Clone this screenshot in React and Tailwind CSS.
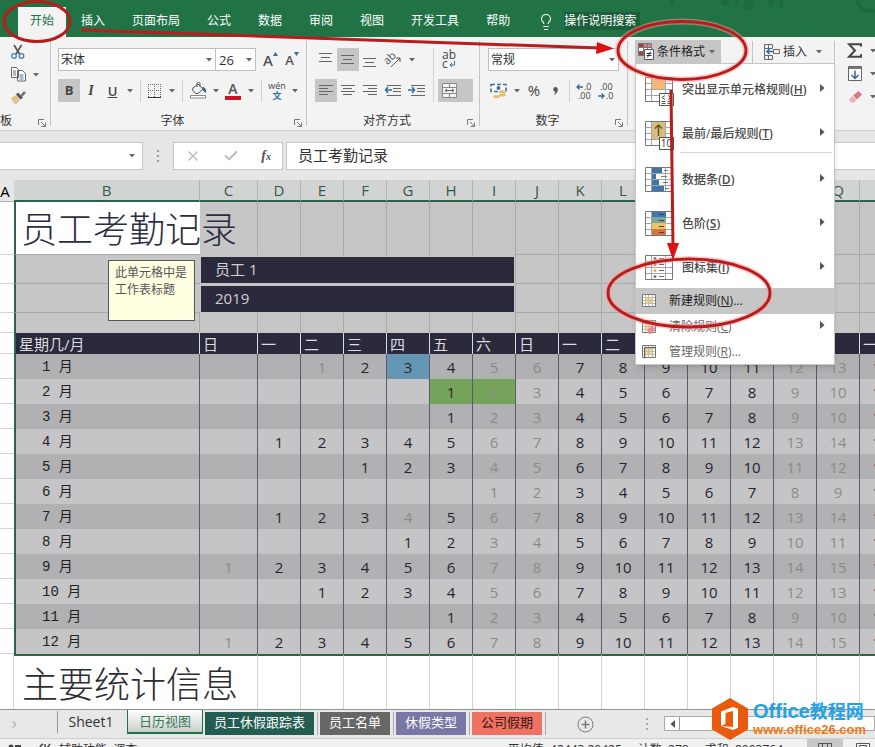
import { ChevronRight, Lightbulb, Check, X } from 'lucide-react';

const WEEK = ['日', '一', '二', '三', '四', '五', '六'];
const COLS = 'CDEFGHIJKLMNOPQR'.split('');
// index of the column that holds day 1 of each month
const STARTS = [2, 5, 5, 1, 3, 6, 1, 4, 0, 2, 5, 0];
const HOLIDAYS = ['0-2', '6-4'];
const MARKS = { '0-4': 'bg-[#6496b4]', '1-5': 'bg-[#76a35b]', '1-6': 'bg-[#76a35b]' };

const TABS = ['开始', '插入', '页面布局', '公式', '数据', '审阅', '视图', '开发工具', '帮助'];

const SHEETS = [
  ['员工休假跟踪表', 'bg-[#245c52] text-white'],
  ['员工名单', 'bg-[#676767] text-white'],
  ['休假类型', 'bg-[#7877a5] text-white'],
  ['公司假期', 'bg-[#ee7263] text-[#3c1512]'],
];

function Caret() {
  return (
    <span className="w-[13px] shrink-0 flex justify-center">
      <svg width="6" height="4" viewBox="0 0 6 4"><path d="M0 0h6L3 3.6z" fill="#666" /></svg>
    </span>
  );
}

function Tool({ label, className = 'w-[22px]', children }) {
  return (
    <button aria-label={label} className={`h-[23px] shrink-0 flex items-center justify-center ${className}`}>
      {children}
    </button>
  );
}

const Sep = () => <span className="w-px h-[22px] mx-1 shrink-0 bg-[#d0d0d0]" />;

function GroupFooter({ children }) {
  return (
    <>
      <footer className="flex items-center text-xs leading-[18px] text-[#333]">
        {children}
        <svg width="8" height="8" viewBox="0 0 8 8" className="mr-[5px] mt-1 shrink-0" fill="none" stroke="#777">
          <path d="M.5 6V.5H6M3 3l4 4M7.5 3.5v4h-4" />
        </svg>
      </footer>
      <span className="absolute right-0 top-[4px] bottom-[4px] w-px bg-[#c4c4c4]" />
    </>
  );
}

function Group({ title, className, children }) {
  return (
    <section className={`relative shrink-0 flex flex-col justify-between ${className}`}>
      {children}
      <GroupFooter><span className="flex-1 text-center whitespace-nowrap">{title}</span></GroupFooter>
    </section>
  );
}

function Lines({ d, blue }) {
  return (
    <svg width="18" height="14" viewBox="0 0 18 14" fill="none">
      <path d={d} stroke="#666" />
      {blue && <path d={blue} stroke="#2f6c96" strokeWidth="1.5" />}
    </svg>
  );
}

function Clipboard() {
  return (
    <section className="relative w-[51px] shrink-0 flex flex-col justify-between pt-[3px]">
      <div className="flex flex-col pl-[7px]">
        <Tool label="剪切">
          <svg width="16" height="16" viewBox="0 0 16 16" fill="none">
            <path d="M4 1l5.5 9M11.500 1L6 10" stroke="#555" strokeWidth="1.7" />
            <circle cx="4" cy="12" r="2.3" stroke="#4d7ca3" strokeWidth="1.3" />
            <circle cx="11.5" cy="12" r="2.3" stroke="#4d7ca3" strokeWidth="1.3" />
          </svg>
        </Tool>
        <div className="flex items-center">
          <Tool label="复制">
            <svg width="17" height="15" viewBox="0 0 17 15" fill="#fff" stroke="#666">
              <path d="M1.5.5h5l2 2v8h-7zM7.5 3.5h5l3 3v7.500h-8z" />
              <path d="M3 4h3M3 6h3M3 8h3M9.500 8h4M9.500 10h4M9.500 12h4" stroke="#4d7ca3" />
            </svg>
          </Tool>
          <Caret />
        </div>
        <Tool label="格式刷">
          <svg width="17" height="15" viewBox="0 0 17 15">
            <path d="M1 8l5-3 4 5-4 4.5c-2-1-4-3.5-5-6.5z" fill="#e0c48b" />
            <path d="M6 4.5l2-2 5 5-2.5 2z" fill="#555" />
            <path d="M10 5.5l4-4.5 2 2-4 4z" fill="#777" />
          </svg>
        </Tool>
      </div>
      <GroupFooter><span className="flex-1">板</span></GroupFooter>
    </section>
  );
}

function FontGroup() {
  return (
    <Group title="字体" className="w-[256px] pt-[11px]">
      <div className="flex flex-col gap-2 pl-[7px]">
        <div className="flex items-center h-[23px]">
          <div className="flex items-center w-[158px] h-[23px] bg-white border border-[#c0c0c0]">
            <select aria-label="字体" className="appearance-none flex-1 pl-[2px] text-xs leading-5 text-[#333] outline-none">
              <option>宋体</option>
            </select>
            <Caret />
          </div>
          <div className="flex items-center w-10 h-[23px] bg-white border border-l-0 border-[#c0c0c0]">
            <select aria-label="字号" className="appearance-none w-[26px] pl-[3px] text-[13px] leading-5 text-[#333] outline-none">
              <option>26</option>
            </select>
            <Caret />
          </div>
          <Tool label="增大字号" className="w-[25px] pl-1">
            <span className="text-[15px] leading-5 font-semibold text-[#555]">A</span>
            <svg width="5" height="4" viewBox="0 0 5 4" className="mb-3"><path d="M0 4l2.5-4L5 4z" fill="#346c96" /></svg>
          </Tool>
          <Tool label="减小字号">
            <span className="text-[13px] leading-5 font-semibold text-[#555]">A</span>
            <svg width="5" height="4" viewBox="0 0 5 4" className="mb-3"><path d="M0 0h5L2.5 4z" fill="#346c96" /></svg>
          </Tool>
        </div>
        <div className="flex items-center h-[23px] text-[#444]">
          <Tool label="加粗" className="w-[22px] bg-[#c6c6c6]"><b className="text-[13px]">B</b></Tool>
          <Tool label="倾斜"><i className="text-sm font-bold font-['Liberation_Serif',serif]">I</i></Tool>
          <Tool label="下划线" className="w-[21px]"><span className="text-[13px] leading-[14px] font-semibold underline">U</span></Tool>
          <Caret />
          <Sep />
          <Tool label="边框" className="w-5">
            <svg width="14" height="14" viewBox="0 0 14 14" fill="none" stroke="#666">
              <path d="M.5 0v13M6.5 0v13M12.5 0v13M0 .5h13M0 6.5h13" strokeDasharray="1 1" />
              <path d="M0 13.500h13" stroke="#333" />
            </svg>
          </Tool>
          <Caret />
          <Sep />
          <Tool label="填充颜色">
            <svg width="17" height="17" viewBox="0 0 17 17" fill="none" stroke="#555">
              <path d="M3 6l5-4 5 5-5 4.500H5.500L2.500 8zM7 5V1.500c0-1.500 3-1.500 3 0V5" />
              <path d="M13 5c2 1 3 3 2.500 5.500L13 8z" fill="#346c96" stroke="#346c96" />
              <path d="M.5 13.500h15v2.500H.5z" fill="#fff" stroke="#888" />
            </svg>
          </Tool>
          <Caret />
          <Tool label="字体颜色" className="w-[22px] flex-col">
            <span className="text-sm leading-[14px] font-semibold text-[#555]">A</span>
            <span className="w-4 h-1 bg-[#cf1020]" />
          </Tool>
          <Caret />
          <Sep />
          <Tool label="拼音" className="w-[22px] flex-col">
            <span className="text-[9px] leading-[10px]">wén</span>
            <span className="text-[9px] leading-[10px] font-bold text-[#2f6c96]">文</span>
          </Tool>
          <Caret />
        </div>
      </div>
    </Group>
  );
}

function AlignGroup() {
  return (
    <Group title="对齐方式" className="w-[173px] pt-[11px]">
      <div className="flex pl-2">
        <div className="flex flex-col gap-2">
          <div className="flex items-center h-[23px]">
            <Tool label="顶端对齐"><Lines d="M2 .5h13M4 4.500h9M2 8.500h13" /></Tool>
            <Tool label="垂直居中" className="w-[22px] bg-[#c6c6c6]"><Lines d="M2 2.500h13M4 6.500h9M2 10.500h13" /></Tool>
            <Tool label="底端对齐"><Lines d="M2 5.500h13M4 9.500h9M2 13.500h13" /></Tool>
            <Tool label="方向" className="w-6">
              <svg width="20" height="20" viewBox="0 0 20 20" fill="none" stroke="#555" className="overflow-visible">
                <text x="2" y="13" fontSize="11" fill="#555" stroke="none" transform="rotate(-45 6 11)">ab</text>
                <path d="M8 17l9-9M13 8h4v4" />
              </svg>
            </Tool>
            <Caret />
          </div>
          <div className="flex items-center h-[23px]">
            <Tool label="左对齐" className="w-[22px] bg-[#c6c6c6]"><Lines d="M2 1.500h14M2 4.500h9M2 7.500h14M2 10.500h9" /></Tool>
            <Tool label="居中"><Lines d="M2 1.500h14M4 4.500h9M2 7.500h14M4 10.500h9" /></Tool>
            <Tool label="右对齐"><Lines d="M2 1.500h14M7 4.500h9M2 7.500h14M7 10.500h9" /></Tool>
            <Tool label="减少缩进量" className="w-6"><Lines d="M3 1.500h14M9 4.500h8M9 7.500h8M3 11.500h14" blue="M8 6H1.500M4 3L1.500 6 4 9" /></Tool>
            <Tool label="增加缩进量" className="w-6"><Lines d="M3 1.500h14M9 4.500h8M9 7.500h8M3 11.500h14" blue="M0 6h6.500M4 3l2.500 3L4 9" /></Tool>
          </div>
        </div>
        <span className="w-px mx-1 bg-[#d0d0d0]" />
        <div className="flex flex-col gap-2">
          <Tool label="自动换行" className="w-[22px]">
            <svg width="16" height="20" viewBox="0 0 16 20" className="overflow-visible">
              <text x="1" y="9" fontSize="12" fill="#444">ab</text>
              <text x="1" y="18" fontSize="12" fill="#444">c</text>
              <path d="M13.500 11v4H9M11 13l-2 2 2 2" fill="none" stroke="#346c96" />
            </svg>
          </Tool>
          <button aria-label="合并后居中" className="w-[35px] h-[23px] flex items-center pl-1 bg-[#c6c6c6]">
            <svg width="15" height="15" viewBox="0 0 15 15" fill="#f4f4f4" stroke="#888">
              <path d="M.5.5h14v14H.5zM.5 4.500h14M.5 10.500h14M7.500.5v4M7.500 10.500v4" />
              <path d="M3 7.500h9M5 6L3 7.500 5 9M10 6l2 1.500L10 9" fill="none" stroke="#666" />
            </svg>
          </button>
        </div>
      </div>
    </Group>
  );
}

function Decimal({ top, bottom, arrow, low }) {
  return (
    <svg width="18" height="18" viewBox="0 0 18 18" fill="#444" className="overflow-visible">
      <text x={low ? 2 : 8} y="8" fontSize="9">{top}</text>
      <text x={low ? 8 : 2} y="17" fontSize="9">{bottom}</text>
      <path d={arrow} stroke="#346c96" strokeWidth="1.3" fill="none" />
    </svg>
  );
}

function NumberGroup() {
  return (
    <Group title="数字" className="w-[148px] pt-[11px]">
      <div className="flex flex-col gap-2 pl-2">
        <div className="flex items-center w-[131px] h-[23px] bg-white border border-[#c0c0c0]">
          <select aria-label="数字格式" className="appearance-none flex-1 pl-[2px] text-xs leading-5 text-[#333] outline-none">
            <option>常规</option>
          </select>
          <Caret />
        </div>
        <div className="flex items-center h-[23px] text-[#444]">
          <Tool label="会计数字格式">
            <svg width="18" height="16" viewBox="0 0 18 16" fill="none">
              <path d="M1 1.500h15v7H1z" fill="#fff" stroke="#456f92" strokeWidth="1.6" strokeDasharray="4 2" />
              <circle cx="8.5" cy="5" r="2" fill="#456f92" />
              <ellipse cx="12.5" cy="9" rx="3.5" ry="1.5" fill="#e5bf6a" />
              <ellipse cx="12.5" cy="12" rx="3.5" ry="1.5" fill="#e5bf6a" />
              <ellipse cx="6.5" cy="13.5" rx="3.5" ry="1.5" fill="#e5bf6a" />
            </svg>
          </Tool>
          <Caret />
          <Tool label="百分比样式"><span className="text-[15px]">%</span></Tool>
          <Tool label="千位分隔样式" className="w-5">
            <svg width="5" height="8" viewBox="0 0 5 8"><path d="M2.500 0C4 0 5 1 4.800 3 4.600 5.500 3 7 1 8c1-1.500 1.400-2.500 1.200-3.500C-.5 4.500-.3 0 2.500 0z" fill="#555" /></svg>
          </Tool>
          <Sep />
          <Tool label="增加小数位数"><Decimal top=".0" bottom=".00" arrow="M7 5H1M3.500 2.500L1 5l2.500 2.500" /></Tool>
          <Tool label="减少小数位数"><Decimal low top=".00" bottom=".0" arrow="M0 14h6M3.500 11.500L6 14l-2.500 2.500" /></Tool>
        </div>
      </div>
    </Group>
  );
}

// 28px grid that the large menu icons are drawn on
function GridIcon({ children }) {
  return (
    <svg width="28" height="28" viewBox="0 0 28 28" fill="none" className="shrink-0">
      <path d="M.5 1.500h27v24H.5z" fill="#fff" />
      <path d="M.5 7.500h27M.5 13.500h27M.5 19.500h27M6.500 1.500v24M20.500 1.500v24" stroke="#a5a5a5" />
      {children}
      <path d="M.5 1.500h27v24H.5z" stroke="#777" />
    </svg>
  );
}

const BIG_ITEMS = [
  ['突出显示单元格规则', 'H', (
    <div className="relative shrink-0" key="h">
      <GridIcon><path d="M7 2h13v11H7z" fill="#f4b978" /></GridIcon>
      <svg width="15" height="13" viewBox="0 0 15 13" className="absolute left-[14px] top-[17px]" fill="none" stroke="#555">
        <path d="M.5.5h14v12H.5z" fill="#fff" />
        <path d="M6 2.500L3 4.500l3 2M2.500 8.500h4M2.500 10.500h4M9 2.500l3 2-3 2M8.500 8.500h4M8.500 10.500h4" />
      </svg>
    </div>
  )],
  ['最前/最后规则', 'T', (
    <div className="relative shrink-0" key="t">
      <GridIcon>
        <path d="M7 2h13v17H7z" fill="#d9bd7d" />
        <path d="M13.500 16V5M10 8.500L13.500 5 17 8.500" stroke="#6b5325" strokeWidth="1.5" />
      </GridIcon>
      <span className="absolute left-[14px] top-[17px] w-[15px] h-[13px] border border-[#555] bg-white text-[10px] leading-[11px] text-[#333] text-center">10</span>
    </div>
  )],
  ['数据条', 'D', (
    <GridIcon key="d">
      <path d="M7 2h10v5H7zM7 8h4v5H7zM7 14h7v5H7zM7 20h12v5H7z" fill="#3f76ab" />
      <path d="M19 4.500h4M16 10.500h6M18 16.500h5M20 22.500h4" stroke="#777" />
    </GridIcon>
  )],
  ['色阶', 'S', (
    <GridIcon key="s">
      <path d="M7 2h14v5H7z" fill="#3f76ab" />
      <path d="M7 7h14v6H7z" fill="#78a898" />
      <path d="M7 13h14v6H7z" fill="#ecc567" />
      <path d="M7 19h14v6H7z" fill="#d9723d" />
      <path d="M14 4.500h5M14 10.500h5M14 16.500h5M14 22.500h5" stroke="#444" />
    </GridIcon>
  )],
  ['图标集', 'I', (
    <GridIcon key="i">
      <circle cx="10" cy="4.5" r="1.5" fill="#777" />
      <circle cx="10" cy="10.5" r="1.5" fill="#d9723d" />
      <circle cx="10" cy="16.5" r="1.5" fill="#ecb247" />
      <circle cx="10" cy="22.5" r="1.5" fill="#777" />
      <path d="M14 4.500h5M14 10.500h5M14 16.500h5M14 22.500h5" stroke="#666" />
    </GridIcon>
  )],
];

function RuleIcon({ kind }) {
  return (
    <svg width="14" height="14" viewBox="0 0 14 14" fill="none" className="shrink-0">
      <path d="M.5.5h13v12H.5z" fill="#fff" />
      <path d="M4 4h6v5H4z" fill="#f2dc8c" />
      <path d="M.5 3.500h13M.5 6.500h13M.5 9.500h13M3.500.5v12M6.500.5v12M10.500.5v12" stroke="#c4bfa8" />
      <path d="M.5.5h13v12H.5z" stroke="#777" />
      {kind === 'clear' && <path d="M5 10l5-4 4 3-5 5H7z" fill="#e58a98" />}
      {kind === 'manage' && <path d="M2.500 13.500v-11h11" stroke="#666" />}
    </svg>
  );
}

const SubArrow = () => (
  <svg width="5" height="8" viewBox="0 0 5 8" className="ml-auto mr-[9px] mb-1"><path d="M0 0l4.500 4L0 8z" fill="#555" /></svg>
);

function FormatMenu() {
  return (
    <div role="menu" className="absolute z-20 left-0 top-full w-[200px] pt-2 border border-[#c6c6c6] bg-white shadow-md text-xs leading-[18px] text-[#4a4a4a]">
      <div className="flex flex-col gap-2">
        {BIG_ITEMS.map(([name, key, icon]) => (
          <div key={key}>
            <button role="menuitem" className="flex items-center gap-[9px] w-full h-9 pl-[9px] font-medium whitespace-nowrap">
              {icon}
              <span>{name}<span className="font-semibold">(<u>{key}</u>)</span></span>
              <SubArrow />
            </button>
            {key === 'T' && <hr className="ml-11 mr-[2px] mb-[1px] border-[#d4d4d4]" />}
          </div>
        ))}
      </div>
      <button role="menuitem" className="flex items-center gap-[13px] w-full h-[26px] pl-[6px] mt-[2px] bg-[#c6c6c6] text-[#222]">
        <RuleIcon kind="new" /><span>新建规则(<u>N</u>)...</span>
      </button>
      <button role="menuitem" className="flex items-center gap-[13px] w-full h-[25px] pl-[6px] text-[#666]">
        <RuleIcon kind="clear" /><span>清除规则(<u>C</u>)</span><SubArrow />
      </button>
      <button role="menuitem" className="flex items-center gap-[13px] w-full h-[25px] pl-[6px] text-[#666]">
        <RuleIcon kind="manage" /><span>管理规则(<u>R</u>)...</span>
      </button>
    </div>
  );
}

function Ribbon() {
  return (
    <div className="flex h-[94px] shrink-0 bg-[#f3f3f3] border-b border-[#cfcfcf]">
      <Clipboard />
      <FontGroup />
      <AlignGroup />
      <NumberGroup />
      <section className="relative w-[125px] shrink-0 pl-[7px] pt-[3px]">
        <div className="relative w-[86px]">
          <button aria-haspopup="menu" aria-expanded="true" className="flex items-center w-full h-[23px] pl-[3px] bg-[#c6c6c6] text-xs text-[#222] whitespace-nowrap">
            <svg width="17" height="17" viewBox="0 0 17 17" fill="none" className="mr-[2px] shrink-0">
              <path d="M.5.5h13v12H.5z" fill="#fff" />
              <path d="M1 1h4v3H1zM1 8h4v4H1z" fill="#a83b3b" />
              <path d="M6 1h7v3H6z" fill="#c98383" />
              <path d="M.5.5h13v12H.5zM.5 4.500h13M.5 8.500h13M5.500.5v12M9.500.5v12" stroke="#777" />
              <path d="M6.500 6.500h9v10h-9z" fill="#fff" stroke="#555" />
              <path d="M8.500 10.500h5M8.500 12.500h5M12.500 8.500l-3 6" stroke="#333" />
            </svg>
            条件格式
            <Caret />
          </button>
          <FormatMenu />
        </div>
        <span className="absolute right-0 top-[4px] bottom-[4px] w-px bg-[#c4c4c4]" />
      </section>
      <section className="relative w-[82px] shrink-0 pl-[10px] pt-[3px]">
        <button className="flex items-center h-[23px] text-xs text-[#333] whitespace-nowrap">
          <svg width="17" height="16" viewBox="0 0 17 16" fill="none" stroke="#666" className="mr-[3px]">
            <path d="M1.500.5h4v4h-4zM5.500.5h4v4h-4zM1.500 11.500h4v4h-4zM5.500 11.500h4v4h-4zM1.500 4.500v7M10.500 5.500h6v4h-6z" />
            <path d="M10 7.500H4M6.500 5L4 7.500 6.500 10" stroke="#2f6c96" strokeWidth="1.5" />
          </svg>
          插入
          <span className="ml-[5px]"><Caret /></span>
        </button>
        <span className="absolute right-0 top-[4px] bottom-[4px] w-px bg-[#c4c4c4]" />
      </section>
      <section className="shrink-0 pl-[9px] pt-[2px] flex flex-col">
        <div className="flex items-center">
          <Tool label="自动求和">
            <svg width="16" height="15" viewBox="0 0 16 15" fill="none" stroke="#444" strokeWidth="2">
              <path d="M14 3.500V1.200H2L8 7.500 2 13.800h12v-2.500" />
            </svg>
          </Tool>
          <Caret />
        </div>
        <div className="flex items-center">
          <Tool label="填充">
            <svg width="14" height="15" viewBox="0 0 14 15" fill="none">
              <path d="M.5.5h13v14H.5z" fill="#fff" stroke="#666" />
              <path d="M1 1h12v2H1z" fill="#777" />
              <path d="M7 4.500v8M3.500 9L7 12.500 10.500 9" stroke="#2f6c96" strokeWidth="1.5" />
            </svg>
          </Tool>
          <Caret />
        </div>
        <div className="flex items-center">
          <Tool label="清除">
            <svg width="13" height="12" viewBox="0 0 13 12">
              <path d="M4 4.500L9.500 0 13 3.500 8 8.500z" fill="#d97787" />
              <path d="M3.500 5l4 4L5 11.500H2.500L0 8.500z" fill="#edb0b8" />
            </svg>
          </Tool>
          <Caret />
        </div>
      </section>
    </div>
  );
}

function TitleTabs() {
  return (
    <nav className="relative flex items-end h-[37px] shrink-0 pl-[18px] bg-[#217346] overflow-hidden">
      <svg width="240" height="37" viewBox="0 0 240 37" className="absolute right-0 top-0" fill="none" stroke="#1e6a40" strokeWidth="4">
        <path d="M37 0v5M102 0v6M136 0v6M146 0v7" />
        <circle cx="90" cy="2" r="2" />
        <circle cx="114" cy="5" r="3" />
        <circle cx="236" cy="-4" r="15" />
      </svg>
      <div className="flex gap-[3px] text-xs text-white">
        {TABS.map((tab, i) => (
          <button key={tab} className={`h-[30px] px-3 pb-[2px] whitespace-nowrap ${i === 0 ? 'bg-[#f3f3f3] text-[#217346]' : ''}`}>
            {tab}
          </button>
        ))}
      </div>
      <label htmlFor="tell-me" className="h-[30px] flex items-center pl-[15px] text-white">
        <Lightbulb size={18} strokeWidth={1.5} />
      </label>
      <input id="tell-me" aria-label="操作说明搜索" placeholder="操作说明搜索" className="relative w-[76px] h-[18px] mb-[7px] ml-[9px] text-xs leading-[18px] bg-[#1d5f3b] placeholder-white outline-none" />
    </nav>
  );
}

function FormulaBar() {
  return (
    <div className="flex items-center h-[49px] shrink-0 bg-[#e6e6e6]">
      <div className="flex items-center w-[143px] h-[28px] pr-[4px] shrink-0 bg-white border border-l-0 border-[#c6c6c6]">
        <input aria-label="名称框" className="flex-1 min-w-0 outline-none" />
        <Caret />
      </div>
      <span className="w-[30px] flex justify-center shrink-0">
        <svg width="2" height="12" viewBox="0 0 2 12" fill="#999"><path d="M0 0h2v2H0zM0 5h2v2H0zM0 10h2v2H0z" /></svg>
      </span>
      <div className="flex items-center justify-around w-[110px] h-[28px] shrink-0 bg-white border border-[#c6c6c6]">
        <button aria-label="取消" className="text-[#bbb]"><X size={16} strokeWidth={2} /></button>
        <button aria-label="输入" className="text-[#bbb]"><Check size={16} strokeWidth={3} /></button>
        <button aria-label="插入函数" className="text-sm italic font-bold text-[#555] font-['Liberation_Serif',serif]">f<span className="text-[10px]">x</span></button>
      </div>
      <input aria-label="编辑栏" defaultValue="员工考勤记录" className="flex-1 min-w-0 h-[28px] ml-[3px] pl-[11px] pb-[2px] bg-white border border-r-0 border-[#c6c6c6] text-[15px] text-[#333] outline-none" />
    </div>
  );
}

const LINE = 'border-r border-[#a9a9a9]';
const SERIF = "font-['Liberation_Serif','Noto_Sans_CJK_SC',serif] font-light";

function TitleBlock() {
  const rest = COLS.slice(7);
  return (
    <>
      <tr className="h-[53px]">
        <td className="bg-white border-b border-[#d4d4d4]" />
        <th scope="row" className={`relative bg-white border-l-2 border-l-[#2f6347] border-b border-b-[#a9a9a9] text-left align-bottom ${SERIF}`}>
          <span className="relative z-10 block pl-[5px] text-4xl leading-[46px] text-[#2d2d42] whitespace-nowrap">员工考勤记录</span>
        </th>
        {COLS.map((c, i) => <td key={c} className={`${LINE} ${i > 6 ? 'border-b' : ''}`} />)}
      </tr>
      {['员工 1', '2019'].map((text, i) => (
        <tr key={text} className="h-[29px]">
          <td className="bg-white border-b border-[#d4d4d4]" />
          <td className="relative border-l-2 border-l-[#2f6347] border-b border-b-[#a9a9a9]">
            {i === 0 && (
              <div className="absolute z-10 left-[92px] top-[5px] w-[87px] h-[61px] pl-[6px] pt-[3px] bg-[#fffee1] border border-[#555] text-xs leading-[17px] text-[#555]">
                此单元格中是<br />工作表标题
              </div>
            )}
          </td>
          <td colSpan={7} className="border-r border-[#a9a9a9] p-px">
            <div className="h-[26px] pl-[14px] bg-[#2b2a3d] text-[15px] leading-6 text-[#d0d0d6]">{text}</div>
          </td>
          {rest.map((c) => <td key={c} className={`${LINE} border-b`} />)}
        </tr>
      ))}
      <tr className="h-5">
        <td className="bg-white border-b border-[#d4d4d4]" />
        <td className="border-l-2 border-l-[#2f6347] border-r border-r-[#a9a9a9]" />
        {COLS.map((c) => <td key={c} className={LINE} />)}
      </tr>
    </>
  );
}

function MonthRow({ month }) {
  return (
    <tr className={`h-[25px] ${month % 2 ? 'bg-[#c5c4c6]' : 'bg-[#b1b0b2]'}`}>
      <td className="bg-white border-b border-[#d4d4d4]" />
      <th scope="row" className="border-l-2 border-l-[#2f6347] border-r border-r-[#5c5b69] pl-[26px] text-left text-sm leading-5 font-normal text-[#222] whitespace-pre font-['Liberation_Mono','Noto_Sans_CJK_SC',monospace]">
        {month + 1} 月
      </th>
      {COLS.map((c, i) => {
        const day = i - STARTS[month] + 1;
        const id = `${month}-${i}`;
        const off = i % 7 === 0 || i % 7 === 6 || HOLIDAYS.includes(id);
        return (
          <td key={c} className={`border-r border-[#5c5b69] text-center text-[15px] leading-5 ${MARKS[id] || ''} ${off ? 'text-[#8b8b8d]' : 'text-[#26262e]'}`}>
            {day > 0 ? day : ''}
          </td>
        );
      })}
    </tr>
  );
}

function Sheet() {
  return (
    <div className="shrink-0 overflow-hidden bg-white">
      <table className="table-fixed w-[903px] border-separate border-spacing-0 bg-[#c6c6c6] [&_td]:py-0 [&_th]:py-0">
        <colgroup>
          <col className="w-[14px]" />
          <col className="w-[186px]" />
          <col className="w-[58px]" />
          {COLS.slice(1).map((c) => <col key={c} className="w-[43px]" />)}
        </colgroup>
        <thead>
          <tr className="h-[22px] text-[15px] leading-5 text-[#38574a]">
            <th className="bg-[#e6e6e6] border-b border-[#b0b0b0] p-0 font-normal text-black">
              <span className="flex justify-center w-[10px]">A</span>
            </th>
            {['B', ...COLS].map((c) => (
              <th key={c} className="p-0 font-normal bg-[#d2d4d3] border-r border-r-[#b2b5b3] border-b-2 border-b-[#2f6347]">{c}</th>
            ))}
          </tr>
        </thead>
        <tbody>
          <TitleBlock />
          <tr className="h-[21px] bg-[#2b2a3d] text-[15px] leading-5 text-[#dcdce0]">
            <td className="bg-white border-b border-[#d4d4d4]" />
            <th className="border-l-2 border-l-[#2f6347] border-r border-r-[#dcdce0] pl-[3px] pb-px text-left font-normal">星期几/月</th>
            {COLS.map((c, i) => (
              <th key={c} className="border-r border-[#dcdce0] pl-[3px] text-left font-normal">{WEEK[i % 7]}</th>
            ))}
          </tr>
          {STARTS.map((_, m) => <MonthRow key={m} month={m} />)}
          <tr className="h-[55px] bg-white">
            <td className="border-r border-[#d4d4d4]" />
            <th colSpan={2} scope="row" className={`border-t-2 border-t-[#2f6347] border-r border-r-[#d4d4d4] pl-[8px] text-left align-bottom ${SERIF}`}>
              <span className="block text-4xl leading-[46px] text-[#2d2d32] whitespace-nowrap">主要统计信息</span>
            </th>
            {COLS.slice(1).map((c) => <td key={c} className="border-t-2 border-t-[#2f6347] border-r border-r-[#d4d4d4]" />)}
          </tr>
        </tbody>
      </table>
    </div>
  );
}

function SheetTabs() {
  return (
    <div className="flex h-[29px] shrink-0 bg-[#e9e8e8] border-t border-[#8a968f] text-[13px] leading-5">
      <button aria-label="下一张" className="w-[57px] pl-[9px] shrink-0 text-[#b5b5b5]"><ChevronRight size={11} strokeWidth={3} /></button>
      <button className="w-[70px] h-[22px] mt-px pr-[3px] shrink-0 border-l border-[#999] text-sm text-[#333]">Sheet1</button>
      <button className="w-[76px] h-[24px] shrink-0 bg-linear-to-b from-white to-[#c9d0cc] border-x border-b-2 border-[#217346] text-[#38785a]">日历视图</button>
      {SHEETS.map(([name, tone]) => (
        <div key={name} className="flex h-[23px] mt-[2px] shrink-0">
          <button className={`ml-[2px] mr-[3px] px-[9px] pb-[4px] whitespace-nowrap ${tone}`}>{name}</button>
          <span className="w-px bg-[#aaa]" />
        </div>
      ))}
      <button aria-label="新工作表" className="ml-[31px] shrink-0">
        <svg width="17" height="17" viewBox="0 0 17 17" fill="none" stroke="#777">
          <circle cx="8.5" cy="8.5" r="7.5" /><path d="M8.500 4.500v8M4.500 8.500h8" strokeWidth="1.5" />
        </svg>
      </button>
      <span className="flex items-center ml-auto mr-4">
        <svg width="2" height="12" viewBox="0 0 2 12" fill="#aaa"><path d="M0 0h2v2H0zM0 5h2v2H0zM0 10h2v2H0z" /></svg>
      </span>
      <div className="flex w-[211px] h-[15px] mt-[6px] shrink-0 bg-white border border-[#aaa]">
        <button aria-label="向左滚动" className="w-[15px] flex items-center justify-center border-r border-[#999]">
          <svg width="5" height="8" viewBox="0 0 5 8"><path d="M5 0v8L.5 4z" fill="#555" /></svg>
        </button>
      </div>
    </div>
  );
}

function StatusBar() {
  return (
    <div className="flex items-center h-[22px] shrink-0 bg-[#f1f1f1] border-t border-[#d0d0d0] text-xs leading-[18px] text-[#333] whitespace-nowrap">
      <svg width="14" height="14" viewBox="0 0 14 14" className="ml-2" fill="#444">
        <circle cx="3" cy="4" r="2.5" /><path d="M7 2h6v10H1V8h10V4H7z" />
      </svg>
      <svg width="14" height="14" viewBox="0 0 14 14" className="ml-4 mr-[7px]" fill="none" stroke="#444" strokeWidth="1.5">
        <path d="M5 1C1 3 0 9 5 12M7 1v9M12 1l-3 4 4 2" />
      </svg>
      <span>辅助功能: 调查</span>
      <div className="flex gap-4 ml-auto mr-6">
        <span>平均值: 42443.20425</span>
        <span>计数: 278</span>
        <span>求和: 8093764</span>
      </div>
      <button aria-label="普通" className="flex items-center justify-center w-9 h-[21px] bg-[#c8c8c8]">
        <svg width="14" height="13" viewBox="0 0 14 13" fill="none" stroke="#555"><path d="M.5.5h13v12H.5zM.5 4.500h13M.5 8.500h13M4.500.5v12M9.500.5v12" /></svg>
      </button>
      <button aria-label="页面布局视图" className="ml-[13px] mr-[5px]">
        <svg width="14" height="13" viewBox="0 0 14 13" fill="none" stroke="#555"><path d="M.5.5h13v12H.5zM3.500 2.500h7v10h-7zM5 5.500h4M5 8.500h4" /></svg>
      </button>
    </div>
  );
}

// hand-drawn red rings and arrows over the workbook
function Annotations() {
  return (
    <svg width="875" height="747" viewBox="0 0 875 747" className="absolute left-0 top-0 z-30 pointer-events-none" fill="none">
      <g stroke="#ff9a9a" strokeOpacity=".5" strokeWidth="6">
        <ellipse cx="682" cy="50.5" rx="64" ry="29" />
        <ellipse cx="689" cy="293" rx="81" ry="34" />
      </g>
      <g stroke="#b91c1c" strokeWidth="3">
        <ellipse cx="37" cy="21.5" rx="33" ry="20" />
        <ellipse cx="682" cy="50.5" rx="64" ry="29" />
        <ellipse cx="689" cy="293" rx="81" ry="34" />
        <path d="M81 30L600 48M671 90l2 156" />
      </g>
      <path d="M597 42l17 6.500-18 5.500zM667 243h12l-6 17z" fill="#e01010" />
    </svg>
  );
}

function Watermark() {
  return (
    <a href="#office" className="absolute z-30 right-[9px] top-[698px] flex items-center gap-[5px]">
      <svg width="36" height="42" viewBox="0 0 36 42">
        <path d="M18 0l18 10.500v21L18 42 0 31.500v-21z" fill="#ea5a0c" />
        <path d="M9 13.500L21 9l5 1.800v19L21 32 9 28l12 1V13l-7.500 2v11L9 28z" fill="#fff" />
      </svg>
      <span className="flex flex-col font-bold whitespace-nowrap">
        <span className="text-lg leading-[22px] text-[#22a3e6]"><span className="text-xl leading-[22px] font-['Liberation_Sans',sans-serif]">Office</span>教程网</span>
        <span className="text-[13px] leading-4 text-[#f07a14] font-['Liberation_Sans',sans-serif]">www.office26.com</span>
      </span>
    </a>
  );
}

export default function App() {
  return (
    <div className="relative flex flex-col h-screen overflow-hidden bg-[#e6e6e6] font-['Open_Sans','Noto_Sans_CJK_SC',sans-serif]">
      <TitleTabs />
      <Ribbon />
      <FormulaBar />
      <Sheet />
      <SheetTabs />
      <StatusBar />
      <Annotations />
      <Watermark />
    </div>
  );
}
